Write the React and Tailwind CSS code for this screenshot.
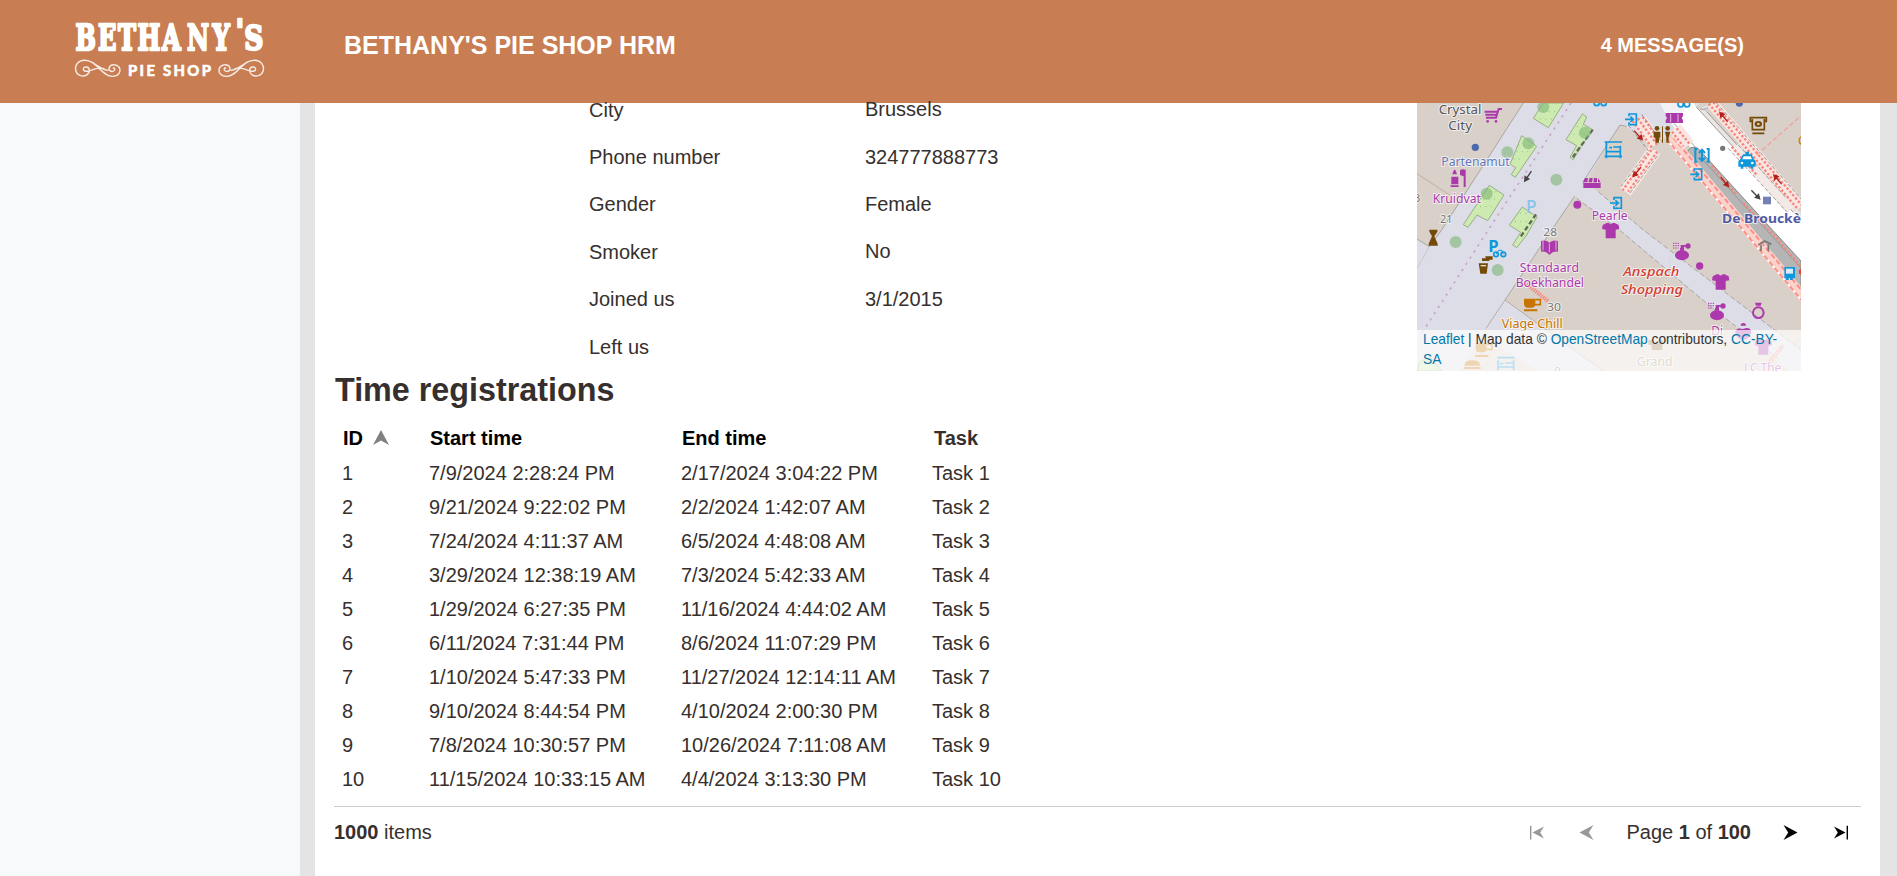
import React from 'react';

const details = [
  ['City', 'Brussels'],
  ['Phone number', '324777888773'],
  ['Gender', 'Female'],
  ['Smoker', 'No'],
  ['Joined us', '3/1/2015'],
  ['Left us', ''],
];

const rows = [
  ['7/9/2024 2:28:24 PM', '2/17/2024 3:04:22 PM'],
  ['9/21/2024 9:22:02 PM', '2/2/2024 1:42:07 AM'],
  ['7/24/2024 4:11:37 AM', '6/5/2024 4:48:08 AM'],
  ['3/29/2024 12:38:19 AM', '7/3/2024 5:42:33 AM'],
  ['1/29/2024 6:27:35 PM', '11/16/2024 4:44:02 AM'],
  ['6/11/2024 7:31:44 PM', '8/6/2024 11:07:29 PM'],
  ['1/10/2024 5:47:33 PM', '11/27/2024 12:14:11 AM'],
  ['9/10/2024 8:44:54 PM', '4/10/2024 2:00:30 PM'],
  ['7/8/2024 10:30:57 PM', '10/26/2024 7:11:08 AM'],
  ['11/15/2024 10:33:15 AM', '4/4/2024 3:13:30 PM'],
];

const swirl =
  'M174 211 C158 210 142 198 128 188 C112 178 92 178 82 190 C72 203 76 222 92 227 C106 231 119 222 118 210 C117 199 101 198 100 207 C100 216 112 215 122 211 C138 205 150 202 162 206 M124 186 C146 196 160 229 188 229 C206 229 213 216 209 205 C204 192 183 191 178 202 C174 212 184 217 191 213 C197 209 194 203 190 204';

function Logo() {
  return (
    <svg className="block h-[103px] w-[300px] shrink-0" viewBox="0 0 300 103" fill="#fff">
      <g fontFamily="DejaVu Serif" fontWeight="700" stroke="#fff" strokeWidth="2.4" strokeLinejoin="round">
        <text transform="scale(.7 1)" x="108 140 168.5 196.5 231.5 267 303.5" y="50.5" fontSize="34.5">BETHANY</text>
        <text transform="scale(.9 1)" x="262" y="41" fontSize="30">'</text>
        <text transform="scale(.78 1)" x="313" y="50.5" fontSize="34">S</text>
      </g>
      <text x="128" y="76" fontFamily="Lato" fontWeight="900" fontSize="14.8" stroke="#fff" strokeWidth=".5" textLength="83" lengthAdjust="spacing">PIE SHOP</text>
      <g fill="none" stroke="#fff" strokeOpacity=".85" strokeWidth="4.2" strokeLinecap="round">
        <path transform="translate(50 0) scale(.3333)" d={swirl} />
        <path transform="translate(289 0) scale(-.3333 .3333)" d={swirl} />
      </g>
    </svg>
  );
}

function Arrow({ dir, bar, muted }) {
  const flip = dir === 'left' ? 'block size-[15px] -scale-x-100' : 'block size-[15px]';
  return (
    <svg className={flip} viewBox="0 0 15 15" fill={muted ? '#999' : '#000'}>
      {bar ? <path d="M0 1.5 L11.5 7.5 L0 13.5 L3.8 7.5 Z M12.6 .8 H14 V14.4 H12.6 Z" /> : <path d="M.5 0 L14.5 7.5 L.5 15 L5.2 7.5 Z" />}
    </svg>
  );
}

function Tree({ x, y, r = 18 }) {
  return <circle cx={x} cy={y} r={r} fill="#7fb574" fillOpacity=".6" />;
}

function Entrance({ x, y }) {
  return (
    <g transform={`translate(${x} ${y})`} fill="none" stroke="#0f97dc" strokeWidth="5">
      <path d="M-8 -9 V-16 H14 V16 H-8 V9 M-20 0 H4 M-4 -8 L5 0 L-4 8" />
    </g>
  );
}

function Shirt({ x, y }) {
  return <path transform={`translate(${x} ${y})`} fill="#ac39ac" d="M-24 -16 L-12 -22 H-6 Q0 -15 6 -22 H12 L24 -16 L26 -4 L15 -2 V24 H-15 V-2 L-26 -4 Z" />;
}

function Perfume({ x, y }) {
  return (
    <g transform={`translate(${x} ${y})`} fill="#ac39ac">
      <ellipse cx="0" cy="14" rx="21" ry="15" />
      <path d="M-6 -8 H6 V0 H-6 Z M-4 -17 H14 V-12 H6 V-8 H-4 Z" />
      <circle cx="18" cy="-14" r="8" />
      <path d="M-27 -22 H-7 M-27 -15 H-7 M-27 -8 H-11" stroke="#ac39ac" strokeWidth="3" strokeDasharray="4 3" />
    </g>
  );
}

function MapArrow({ x, y, r, color = '#b3201a' }) {
  return (
    <g transform={`translate(${x} ${y}) rotate(${r})`}>
      <path d="M-20 0 H6" stroke={color} strokeWidth="4" />
      <path d="M20 0 L2 -10 V10 Z" fill={color} />
    </g>
  );
}

function Label({ x, y, size = 37, fill = '#ac39ac', w, children, ...rest }) {
  return (
    <text x={x} y={y} fontSize={size} fill={fill} textLength={w} lengthAdjust="spacingAndGlyphs" stroke="#fff" strokeOpacity=".65" strokeWidth="6" strokeLinejoin="round" paintOrder="stroke" {...rest}>
      {children}
    </text>
  );
}

function MapDrawing() {
  return (
    <svg className="block h-[268px] w-[384px]" viewBox="21 24 1152 804" preserveAspectRatio="none" fontFamily="Noto Sans">
      <rect x="21" y="24" width="1152" height="804" fill="#d9d0c9" />
      {/* pedestrian avenue */}
      <path d="M340 24 L95 405 L58 455 L21 432 V828 H150 L228 700 L285 615 L425 405 L495 302 L525 262 L630 90 L650 96 L725 155 L790 110 L870 24 Z" fill="#dddde8" />
      <path d="M340 24 L95 405 L58 455 L21 432 M285 615 L425 405 L495 302 Q525 305 525 270 L518 262 L630 90 L650 94" fill="none" stroke="#aaa5a1" strokeWidth="3" />
      <path d="M21 236 L122 302" stroke="#bcb0a6" strokeWidth="3" />
      <path d="M58 455 L21 520" stroke="#bbb" strokeWidth="2" />
      <path d="M483 24 L225 420 L36 714" stroke="#c6a5c5" strokeWidth="5" strokeDasharray="7 15" fill="none" />
      {/* diagonal lane */}
      <path d="M492 302 L530 262 L700 405 L1173 765 V828 H1140 L920 650 L632 408 Z" fill="#dddde8" />
      <path d="M565 290 L700 405 L1173 765 M500 310 L632 408 L920 650 L1110 795" fill="none" stroke="#a6a6a4" strokeWidth="3" strokeDasharray="16 7" />
      {/* lower street */}
      <path d="M228 700 L285 615 L580 828 H380 L240 735 Z" fill="#dddde8" />
      <path d="M228 700 L285 615 L580 828" fill="none" stroke="#b5aca4" strokeWidth="3" />
      <path d="M779 24 V828" stroke="#dfd7d0" strokeWidth="2" />
      {/* boulevard */}
      <path d="M750 24 H850 L862 40 L1173 375 V520 L880 200 L800 110 Z" fill="#fff" />
      <path d="M750 24 H840 L792 82 Z" fill="#f0f0f5" />
      <path d="M862 40 L890 50 L1060 235 L1173 355 V375 Z" fill="#e9e5e2" />
      <path d="M858 35 L1150 352 M792 85 L1173 510 M890 50 L1060 235" fill="none" stroke="#8e8985" strokeWidth="2.5" />
      <path d="M870 42 Q895 48 900 24" fill="#dddde8" stroke="#aaa5a1" strokeWidth="3" />
      <path d="M831 174 Q838 150 864 160 L1090 408 L1173 498 V580 Z" fill="#b5b5b5" stroke="#888" strokeWidth="3" />
      <path d="M880 196 L1173 520" stroke="#999" strokeWidth="3" />
      <path d="M780 128 L1190 618" stroke="#fbd3cd" strokeWidth="30" />
      <path d="M772 136 L1190 634" stroke="#fff" strokeWidth="5" />
      <path d="M790 128 L1185 598 M770 132 L1180 622" stroke="#fa9086" strokeWidth="6" strokeDasharray="16 8" />
      {/* escalators */}
      <g fill="none" strokeLinecap="butt">
        <path d="M690 74 L738 148 M735 165 L645 290 M795 100 L835 150" stroke="#f9e5e1" strokeWidth="42" />
        <path d="M905 24 L1173 335" stroke="#f9e5e1" strokeWidth="34" />
        <path d="M975 155 L1140 345" stroke="#f3e9e6" strokeWidth="26" />
        <path d="M668 78 L730 164 M683 70 L742 150 M698 66 L750 138 M724 165 L638 286 M742 170 L654 290 M786 110 L820 154 M800 100 L840 148 M896 26 L1163 342 M910 22 L1180 336 M965 155 L1042 242 M905 212 L980 300 M1000 325 L1100 430 L1173 515" stroke="#f98378" strokeWidth="7" strokeDasharray="7 6" />
        <path d="M655 90 L716 168 M695 58 L757 142 M632 275 L712 172 M660 294 L747 176 M955 160 L1130 350 M985 150 L1130 310 M920 24 L1173 312" stroke="#8e8985" strokeWidth="2.5" strokeDasharray="12 6" />
        <path d="M1040 180 L1173 62" stroke="#f1a199" strokeWidth="4" strokeDasharray="14 8" />
        <path d="M350 567 L416 620" stroke="#f58679" strokeWidth="12" strokeDasharray="4 3" />
        <path d="M1075 805 L1120 750" stroke="#f58679" strokeWidth="12" strokeDasharray="4 3" />
      </g>
      <circle cx="1175" cy="530" r="9" fill="#d44" />
      <MapArrow x={686} y={122} r={48} />
      <MapArrow x={680} y={232} r={130} />
      <MapArrow x={945} y={262} r={50} />
      <MapArrow x={940} y={65} r={-130} />
      <MapArrow x={1102} y={252} r={-130} />
      <MapArrow x={1038} y={300} r={46} color="#444" />
      <MapArrow x={353} y={245} r={124} color="#444" />
      {/* green beds */}
      <g fill="#cdebb0" stroke="#99ad88" strokeWidth="3">
        <path d="M400 24 H461 L415 98 L370 70 Z" />
        <path d="M517 57 L530 66 L520 88 L548 104 L508 162 L490 194 L480 187 L500 152 L468 134 Z" />
        <path d="M335 122 L380 154 L316 247 L304 239 L317 218 L300 208 Z" />
        <path d="M238 271 L282 300 L233 377 L201 360 L174 397 L160 389 Z" />
        <path d="M337 336 L381 366 L350 420 L320 458 L308 450 L332 412 L298 390 Z" />
        <path d="M30 800 L60 785 L95 828 H21 Z" />
      </g>
      <path d="M548 104 L486 190 M378 358 L332 425" stroke="#606955" strokeWidth="7" strokeDasharray="14 8" />
      <g stroke="#91bd7c" strokeWidth="3" strokeDasharray="3 13">
        <path d="M400 50 H440 M390 72 H430 M500 95 H535 M490 118 H525 M325 150 H370 M320 170 H360 M310 192 H340 M240 290 H270 M220 312 H265 M210 335 H250 M330 355 H365 M315 380 H350" />
      </g>
      <Tree x={400} y={36} />
      <Tree x={525} y={113} />
      <Tree x={355} y={145} />
      <Tree x={292} y={172} />
      <Tree x={230} y={296} />
      <Tree x={439} y={254} />
      <Tree x={137} y={441} />
      <Tree x={263} y={525} />
      {/* shops and services */}
      <circle cx="196" cy="157" r="11" fill="#4c69aa" />
      <circle cx="502" cy="329" r="12" fill="#ac39ac" />
      <circle cx="869" cy="513" r="11" fill="#ac39ac" />
      <circle cx="938" cy="160" r="8" fill="#777" />
      <circle cx="988" cy="24" r="11" fill="#4c69aa" />
      <path d="M276 42 H266 L258 68 H228 M224 50 H264 M226 59 H260" fill="none" stroke="#ac39ac" strokeWidth="6" />
      <circle cx="233" cy="79" r="4" fill="#ac39ac" />
      <circle cx="258" cy="79" r="4" fill="#ac39ac" />
      <path d="M124 245 H145 V268 H124 Z M122 271 H146 V276 H122 Z M127 238 Q134 210 141 238 Z M150 226 Q156 220 167 224 V276 H161 V244 L150 240 Z" fill="#ac39ac" />
      <path d="M520 264 H572 V279 H520 Z M519 262 L525 249 H534 L532 262 Z M535 262 L539 249 H548 L546 262 Z M550 262 L552 249 H561 V262 Z M564 262 V249 L572 262 Z" fill="#ac39ac" />
      <path d="M767 54 H819 V64 Q812 69 819 75 V84 H767 V75 Q774 69 767 64 Z" fill="#ac39ac" />
      <path d="M782 57 V82 M804 57 V82" stroke="#e3b7e3" strokeWidth="3" />
      <Shirt x={602} y={406} />
      <Shirt x={932} y={560} />
      <Shirt x={1060} y={755} />
      <Perfume x={816} y={467} />
      <Perfume x={921} y={647} />
      <circle cx="1045" cy="653" r="16" fill="none" stroke="#ac39ac" strokeWidth="6" />
      <path d="M1035 623 H1055 L1052 632 H1038 Z" fill="#ac39ac" />
      <path d="M976 710 Q980 696 999 702 Q1020 694 1024 710 Q1018 734 999 734 Q980 734 976 710 Z M992 692 A8 8 0 1 1 1008 692 Z" fill="#ac39ac" />
      <path d="M393 438 Q408 434 418 443 Q429 434 444 438 V470 Q429 468 418 480 Q408 468 393 470 Z" fill="#ac39ac" />
      <path d="M399 437 V466 M438 437 V466 M418 445 V472" stroke="#e5c8e3" strokeWidth="2.5" />
      <g fill="#734a08">
        <path d="M58 404 H82 V410 L73 424 L83 446 V452 H56 V446 L66 424 L58 410 Z" />
        <path d="M206 505 H234 L230 536 H211 Z M216 490 H228 V484 H248 V494 H238 V498 H216 Z M226 484 H240 V488 H226 Z" />
        <circle cx="741" cy="100" r="7" />
        <circle cx="773" cy="100" r="7" />
        <path d="M731 110 H751 V128 H747 V143 H736 V128 H731 Z M765 110 H781 L776 128 V143 H769 V128 Z M756 94 H759 V143 H756 Z" />
      </g>
      <path d="M1026 79 H1021 V68 H1069 V79 H1064 M1027 72 V104 H1063 V72 M1027 115 H1063" fill="none" stroke="#734a08" strokeWidth="5" />
      <ellipse cx="1045" cy="87" rx="11" ry="9" fill="#734a08" />
      <circle cx="1045" cy="87" r="4" fill="#d9c9a9" />
      <path d="M212 512 H228" stroke="#ddd" strokeWidth="4" />
      <g fill="#c77400">
        <path d="M342 611 H376 V626 Q376 638 364 638 H354 Q342 638 342 626 Z M342 643 H382 V649 H342 Z" />
        <path d="M376 614 H391 V629 H373" fill="none" stroke="#c77400" strokeWidth="5" />
        <path d="M197 745 H230 V760 Q230 772 218 772 H208 Q197 772 197 760 Z M195 780 H235 V786 H195 Z M164 812 Q164 796 187 796 Q210 796 210 812 Z M162 816 H212 V822 H162 Z" />
        <path d="M230 748 H246 V763 H228" fill="none" stroke="#c77400" strokeWidth="5" />
      </g>
      <Entrance x={665} y={73} />
      <Entrance x={861} y={238} />
      <Entrance x={620} y={324} />
      <g fill="none" stroke="#0f97dc" strokeWidth="5">
        <path d="M584 141 H636 M584 184 H636 M589 141 V190 M631 152 V190 M591 170 H630 M598 158 H606 M610 156 H630" />
        <path d="M862 162 H856 V200 H862 M890 162 H896 V200 H890 M876 164 V198 M867 174 L876 164 L885 174 M867 188 L876 198 L885 188" strokeWidth="6" />
        <circle cx="560" cy="24" r="8" />
        <circle cx="581" cy="24" r="8" />
        <circle cx="812" cy="28" r="8" />
        <circle cx="831" cy="28" r="8" />
        <path d="M262 788 H314 M264 826 V796 M311 796 V826 M264 816 H311 M270 806 H280 M285 804 H308" />
        <circle cx="258" cy="478" r="7" />
        <circle cx="280" cy="478" r="7" />
        <path d="M258 478 L266 466 H276 L280 478" strokeWidth="3" />
      </g>
      <path d="M992 192 L999 178 H1006 V170 H1017 V178 H1025 L1031 192 L1037 198 V215 H1030 V221 H1022 V215 H1000 V221 H992 V215 H985 V198 Z" fill="#0f97dc" />
      <path d="M1001 184 H1022 L1026 193 H997 Z" fill="#fff" />
      <circle cx="996" cy="204" r="4" fill="#fff" />
      <circle cx="1027" cy="204" r="4" fill="#fff" />
      <path d="M1123 516 H1155 V550 H1148 V555 H1140 V550 H1136 V555 H1128 V550 H1123 Z" fill="#0f97dc" />
      <path d="M1128 521 H1149 V536 H1128 Z" fill="#d9ecf7" />
      <path d="M1045 450 L1064 438 L1084 448 M1053 450 V468 M1075 448 V468" fill="none" stroke="#777" strokeWidth="5" />
      <rect x="1059" y="305" width="24" height="23" fill="#7581b5" />
      <text x="348" y="353" fontSize="52" fontWeight="500" fill="#88c4ea">P</text>
      <text x="235" y="470" fontSize="50" fontWeight="700" fill="#0f97dc">P</text>
      <Label x={11} y={322} fill="#777" size={35}>3</Label>
      <Label x={90} y={384} fill="#777" size={35} w={38}>21</Label>
      <Label x={400} y={422} fill="#777" size={35} w={41}>28</Label>
      <Label x={411} y={649} fill="#777" size={35} w={42}>30</Label>
      <Label x={86} y={57} fill="#555" w={128}>Crystal</Label>
      <Label x={115} y={105} fill="#555" w={71}>City</Label>
      <Label x={94} y={213} fill="#6378bd" w={205}>Partenamut</Label>
      <Label x={68} y={324} w={145}>Kruidvat</Label>
      <Label x={545} y={376} w={108}>Pearle</Label>
      <Label x={329} y={532} w={178}>Standaard</Label>
      <Label x={317} y={577} w={205}>Boekhandel</Label>
      <Label x={275} y={700} fill="#c77400" w={183}>Viage Chill</Label>
      <Label x={640} y={544} size={39} fill="#d43f33" fontStyle="italic" fontWeight="500" w={168}>Anspach</Label>
      <Label x={632} y={598} size={39} fill="#d43f33" fontStyle="italic" fontWeight="500" w={187}>Shopping</Label>
      <Label x={936} y={384} fill="#4f5aa5" fontWeight="700" w={237}>De Brouckè</Label>
      <Label x={904} y={721} w={35}>Di</Label>
      <path d="M715 735 H730 V745 H745 V735 H757 V765 H725 V750 H715 Z" fill="#8f7440" />
      <Label x={680} y={812} fill="#9d8555" w={108}>Grand</Label>
      <Label x={1002} y={830} w={112}>LC The</Label>
      <Label x={433} y={840} fill="#777" size={34}>9</Label>
      <text x="1164" y="150" fontSize="37" fill="#c77400">C</text>
    </svg>
  );
}

function Map() {
  return (
    <div className="relative h-[268px] w-[384px] overflow-hidden">
      <MapDrawing />
      <div className="absolute inset-x-0 bottom-0 h-[41px] bg-white/70 pl-[6px] text-[13.75px] leading-[19.5px] text-[#333]">
        <span className="text-[#0078a8]">Leaflet</span> | Map data © <span className="text-[#0078a8]">OpenStreetMap</span> contributors, <span className="text-[#0078a8]">CC-BY-<br />SA</span>
      </div>
    </div>
  );
}

export default function App() {
  return (
    <div className="flex h-[876px] w-[1897px] flex-col overflow-hidden bg-white font-['Liberation_Sans',Arial,sans-serif] text-[20px] text-[#362f2d]">
      <header className="flex h-[103px] shrink-0 bg-[#c87d52] font-bold text-white">
        <Logo />
        <div className="flex flex-1 justify-between pt-[30px] pr-[153px] pl-[44px] leading-[30px]">
          <h1 className="text-[25px]">BETHANY'S PIE SHOP HRM</h1>
          <span>4 MESSAGE(S)</span>
        </div>
      </header>
      <div className="flex min-h-0 flex-1">
        <aside className="w-[300px] shrink-0 bg-[#f8f9fb]" />
        <div className="flex min-w-0 flex-1 bg-[#e4e4e4] pr-[17px] pl-[15px]">
          <main className="w-[1565px] bg-white pr-[19px] pl-[19px]">
            <section className="flex h-[267px] justify-between pr-[60px] pl-[255px]">
              <dl className="-mt-[17px]">
                {details.map(([k, v]) => (
                  <div key={k} className="flex h-[47.4px] items-center leading-[30px]">
                    <dt className="w-[276px]">{k}</dt>
                    <dd className="-mt-px">{v}</dd>
                  </div>
                ))}
              </dl>
              <Map />
            </section>
            <h2 className="h-[50px] pl-px text-[32.3px] leading-[40px] font-bold">Time registrations</h2>
            <div className="grid h-[36px] grid-cols-[87px_252px_252px_1fr] items-center pl-[9px] font-bold text-black">
              <div className="flex items-center gap-[10px]">
                ID
                <svg className="size-4" viewBox="0 0 16 16" fill="#808080"><path d="M8 0 L16 15 L8 10.5 L0 15 Z" /></svg>
              </div>
              <div>Start time</div>
              <div>End time</div>
              <div className="text-[#362f2d]">Task</div>
            </div>
            {rows.map(([start, end], i) => (
              <div key={start} className="grid h-[34px] grid-cols-[87px_252px_251px_1fr] items-center pl-[8px]">
                <div>{i + 1}</div>
                <div>{start}</div>
                <div>{end}</div>
                <div>Task {i + 1}</div>
              </div>
            ))}
            <footer className="mt-[10px] flex h-[51px] items-center justify-between border-t border-[#ccc]">
              <div><b>1000</b> items</div>
              <div className="flex items-center pr-[12px]">
                <Arrow dir="left" bar muted />
                <span className="ml-[35px]"><Arrow dir="left" muted /></span>
                <span className="ml-[32px]">Page <b>1</b> of <b>100</b></span>
                <span className="ml-[32px]"><Arrow dir="right" /></span>
                <span className="ml-[36px]"><Arrow dir="right" bar /></span>
              </div>
            </footer>
          </main>
        </div>
      </div>
    </div>
  );
}
